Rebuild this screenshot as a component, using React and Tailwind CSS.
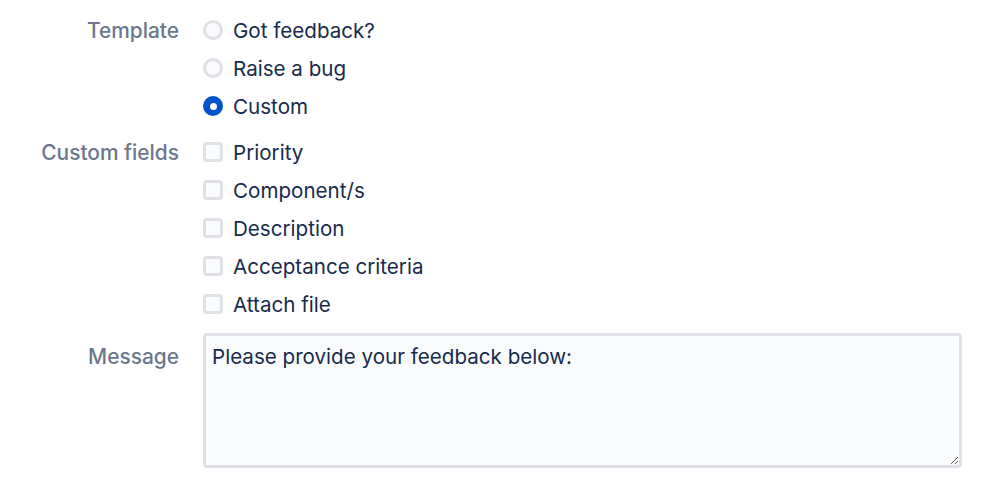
const templates = [
  { label: 'Got feedback?', checked: false },
  { label: 'Raise a bug', checked: false },
  { label: 'Custom', checked: true },
]

const fields = ['Priority', 'Component/s', 'Description', 'Acceptance criteria', 'Attach file']

function Radio({ checked }) {
  if (checked) {
    return (
      <span className="w-5 h-5 rounded-full bg-[#0052cc] flex items-center justify-center flex-shrink-0">
        <span className="w-[7px] h-[7px] rounded-full bg-white" />
      </span>
    )
  }
  return <span className="w-5 h-5 rounded-full border-[3px] border-[#dfe1e6] bg-[#fafbfc] flex-shrink-0" />
}

function Checkbox() {
  return <span className="w-5 h-5 rounded-[4px] border-[3px] border-[#dfe1e6] bg-[#fafbfc] flex-shrink-0" />
}

function Row({ children, label }) {
  return (
    <div className="h-[38px] flex items-center gap-[10px]">
      {children}
      <span className="text-[20.6px] leading-6 text-[#172b4d] pt-px">{label}</span>
    </div>
  )
}

function Label({ children, className = '' }) {
  return (
    <div className={`w-[179px] text-right text-[20.9px] font-medium leading-6 text-[#6b778c] flex-shrink-0 ${className}`}>
      {children}
    </div>
  )
}

export default function App() {
  return (
    <div className="w-[999px] h-[490px] bg-white pt-[11px]" style={{ fontFamily: 'Inter, "Liberation Sans", Arial, sans-serif' }}>
      <div className="flex gap-6">
        <Label className="pt-[8px]">Template</Label>
        <div className="flex flex-col">
          {templates.map((t) => (
            <Row key={t.label} label={t.label}>
              <Radio checked={t.checked} />
            </Row>
          ))}
        </div>
      </div>

      <div className="flex gap-6 mt-2">
        <Label className="pt-[8px]">Custom fields</Label>
        <div className="flex flex-col">
          {fields.map((f) => (
            <Row key={f} label={f}>
              <Checkbox />
            </Row>
          ))}
        </div>
      </div>

      <div className="flex gap-6 mt-[10px]">
        <Label className="pt-[12px]">Message</Label>
        <textarea
          defaultValue="Please provide your feedback below:"
          className="w-[759px] h-[135px] border-[3px] border-[#dfe1e6] rounded-[4px] bg-[#fafbfc] px-[6px] pt-[9px] text-[20.6px] leading-6 text-[#172b4d] outline-none"
        />
      </div>
    </div>
  )
}
